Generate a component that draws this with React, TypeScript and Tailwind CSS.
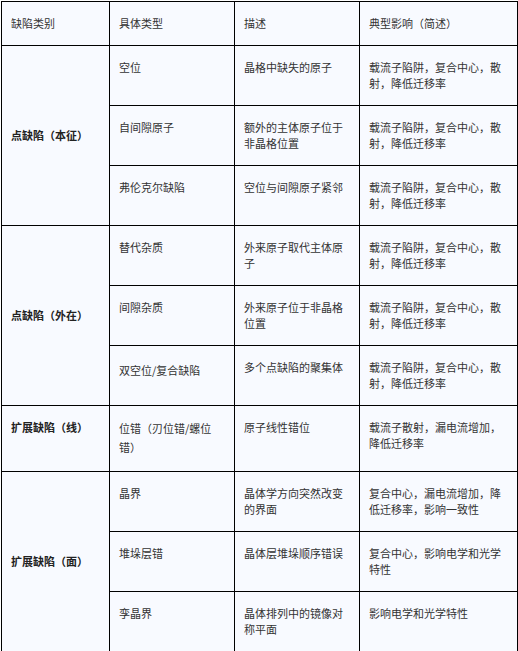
const effect = "载流子陷阱，复合中心，散射，降低迁移率";

type Row = { type: string; desc: string; effect: string; typeCls?: string };
type Group = { name: string; rows: Row[] };

const groups: Group[] = [
  {
    name: "点缺陷（本征）",
    rows: [
      { type: "空位", desc: "晶格中缺失的原子", effect },
      { type: "自间隙原子", desc: "额外的主体原子位于非晶格位置", effect },
      { type: "弗伦克尔缺陷", desc: "空位与间隙原子紧邻", effect },
    ],
  },
  {
    name: "点缺陷（外在）",
    rows: [
      { type: "替代杂质", desc: "外来原子取代主体原子", effect },
      { type: "间隙杂质", desc: "外来原子位于非晶格位置", effect },
      { type: "双空位/复合缺陷", desc: "多个点缺陷的聚集体", effect, typeCls: "pt-[16px]" },
    ],
  },
  {
    name: "扩展缺陷（线）",
    rows: [
      {
        type: "位错（刃位错/螺位错）",
        desc: "原子线性错位",
        effect: "载流子散射，漏电流增加，降低迁移率",
        typeCls: "leading-[19px]",
      },
    ],
  },
  {
    name: "扩展缺陷（面）",
    rows: [
      { type: "晶界", desc: "晶体学方向突然改变的界面", effect: "复合中心，漏电流增加，降低迁移率，影响一致性" },
      { type: "堆垛层错", desc: "晶体层堆垛顺序错误", effect: "复合中心，影响电学和光学特性" },
      { type: "孪晶界", desc: "晶体排列中的镜像对称平面", effect: "影响电学和光学特性" },
    ],
  },
];

const cell = "border border-black px-[9px] pt-[13px] pb-[14px] align-top text-left font-normal";

export default function App() {
  return (
    <div
      className="bg-white p-px text-[11px] leading-[16px] text-[#333]"
      style={{ fontFamily: '"Noto Sans CJK SC", "Noto Sans", sans-serif' }}
    >
      <table className="w-[516px] table-fixed border-collapse bg-[#f8faff]">
        <colgroup>
          <col className="w-[108px]" />
          <col className="w-[125px]" />
          <col className="w-[125px]" />
          <col className="w-[158px]" />
        </colgroup>
        <thead>
          <tr>
            <th className={cell}>缺陷类别</th>
            <th className={cell}>具体类型</th>
            <th className={cell}>描述</th>
            <th className={cell}>典型影响（简述）</th>
          </tr>
        </thead>
        <tbody>
          {groups.map((g) =>
            g.rows.map((r, i) => (
              <tr key={g.name + r.type}>
                {i === 0 && (
                  <td
                    rowSpan={g.rows.length}
                    className={`border border-black px-[9px] pt-[13px] pb-[14px] font-bold text-[#222] ${
                      g.rows.length > 1 ? "align-middle" : "align-top"
                    }`}
                  >
                    {g.name}
                  </td>
                )}
                <td className={`${cell} ${r.typeCls ?? ""}`}>{r.type}</td>
                <td className={cell}>{r.desc}</td>
                <td className={cell}>{r.effect}</td>
              </tr>
            ))
          )}
        </tbody>
      </table>
    </div>
  );
}
